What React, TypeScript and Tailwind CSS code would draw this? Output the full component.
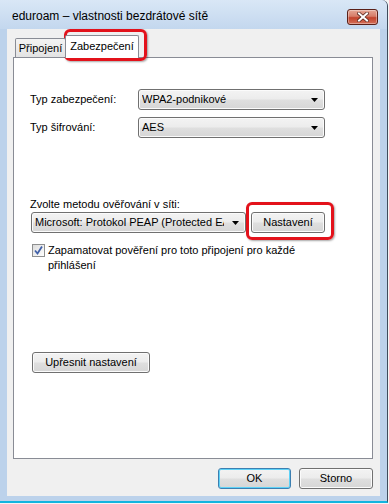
const comboBg =
  "bg-[linear-gradient(to_bottom,#f3f3f3_0%,#ececec_48%,#dfdfdf_52%,#d6d6d6_100%)]";

function Arrow() {
  return (
    <svg width="7" height="4" viewBox="0 0 7 4" className="shrink-0">
      <path d="M0 0 H7 L3.5 4 Z" fill="#000" />
    </svg>
  );
}

function Combo({ value, className }: { value: string; className: string }) {
  return (
    <div
      className={`h-[21px] flex items-center pl-[3px] pr-[6px] rounded-[3px] border border-[#707070] ${comboBg} shadow-[inset_0_0_0_1px_#fbfbfb] ${className}`}
    >
      <span className="flex-1 min-w-0 whitespace-nowrap overflow-hidden leading-[15px] mr-[8px]">{value}</span>
      <Arrow />
    </div>
  );
}

function Button({
  label,
  className,
  primary,
}: {
  label: string;
  className: string;
  primary?: boolean;
}) {
  return (
    <div
      className={`h-[21px] flex items-center justify-center rounded-[3px] border ${
        primary
          ? "border-[#3c7fb1] shadow-[inset_0_0_0_1px_#5ed2f7]"
          : "border-[#707070] shadow-[inset_0_0_0_1px_#fbfbfb]"
      } ${comboBg} ${className}`}
    >
      <span className="leading-[15px]">{label}</span>
    </div>
  );
}

function Highlight({ className }: { className: string }) {
  return (
    <div
      className={`absolute rounded-[6px] border-[3px] border-[#e3121b] shadow-[1px_1px_2px_rgba(0,0,0,0.35)] pointer-events-none ${className}`}
    />
  );
}

export default function App() {
  return (
    <div className="w-[389px] h-[504px] bg-[#f4f4f4] font-['Liberation_Sans',Arial,sans-serif] text-[11px] text-black">
      <div className="relative w-[388px] h-[503px] flex flex-col rounded-tr-[6px] border-r border-[#3f4c5c] border-b-2 border-b-[#12b4df] bg-[#bcd2eb]">
        {/* title bar */}
        <div className="h-[29px] flex items-start justify-between pl-[12px] pr-[9px] pt-[9px] rounded-tr-[6px] bg-[linear-gradient(to_bottom,#d9e7f6,#c3d7ee)]">
          <span className="leading-[15px] text-[12px] text-black">eduroam – vlastnosti bezdrátové sítě</span>
          <div className="w-[31px] h-[16px] flex items-center justify-center rounded-[3px] border border-[#5a2018] bg-[linear-gradient(to_bottom,#e5a796_0%,#d67c68_45%,#c2432c_55%,#d46f58_100%)] shadow-[inset_0_0_0_1px_rgba(255,255,255,0.35)]">
            <svg width="12" height="10" viewBox="0 0 12 10">
              <path d="M2 1.5 L10 8.5 M10 1.5 L2 8.5" stroke="#5b2a22" strokeWidth="3.6" strokeLinecap="square" />
              <path d="M2 1.5 L10 8.5 M10 1.5 L2 8.5" stroke="#ffffff" strokeWidth="2" strokeLinecap="square" />
            </svg>
          </div>
        </div>

        {/* client area */}
        <div className="h-[467px] ml-[7px] w-[373px] bg-[#f0f0f0] flex flex-col pt-[6px]">
          {/* tabs */}
          <div className="h-[22px] flex items-end pl-[8px] relative z-10">
            <div className="h-[19px] w-[51px] flex items-center justify-center border border-b-0 border-[#898c95] rounded-t-[2px] bg-[linear-gradient(to_bottom,#f3f3f3,#e3e3e3)]">
              <span className="leading-[15px]">Připojení</span>
            </div>
            <div className="h-[23px] -mb-px -ml-px w-[74px] flex items-start justify-center pt-[3px] border border-b-0 border-[#898c95] rounded-t-[2px] bg-white">
              <span className="leading-[15px]">Zabezpečení</span>
            </div>
          </div>

          {/* panel */}
          <div className="ml-[6px] w-[360px] h-[402px] border border-[#898c95] bg-white flex flex-col pl-[16px] pt-[31px]">
            <div className="flex items-center h-[21px]">
              <span className="w-[108px] leading-[15px]">Typ zabezpečení:</span>
              <Combo value="WPA2-podnikové" className="w-[187px]" />
            </div>
            <div className="flex items-center h-[21px] mt-[7px]">
              <span className="w-[108px] leading-[15px]">Typ šifrování:</span>
              <Combo value="AES" className="w-[187px]" />
            </div>

            <div className="mt-[59px] leading-[15px]">Zvolte metodu ověřování v síti:</div>
            <div className="flex items-center">
              <Combo value="Microsoft: Protokol PEAP (Protected EAP)" className="w-[215px] ml-px" />
              <Button label="Nastavení" className="w-[74px] ml-[5px]" />
            </div>

            <div className="flex items-start mt-[10px] pl-[2px]">
              <div className="w-[13px] h-[13px] mt-[1px] border border-[#8e8f8f] bg-[linear-gradient(135deg,#dcdcdc,#ffffff)] flex items-center justify-center shrink-0">
                <svg width="11" height="11" viewBox="0 0 11 11">
                  <path d="M2 5.5 L4.5 8.5 L9 1.5" stroke="#4060a8" strokeWidth="1.8" fill="none" />
                </svg>
              </div>
              <div className="ml-[3px] leading-[15px]">
                <div>Zapamatovat pověření pro toto připojení pro každé</div>
                <div>přihlášení</div>
              </div>
            </div>

            <Button label="Upřesnit nastavení" className="w-[118px] mt-[79px] ml-[2px]" />
          </div>

          {/* bottom buttons */}
          <div className="flex justify-end gap-[8px] mt-[9px] pr-[7px]">
            <Button label="OK" className="w-[73px]" primary />
            <Button label="Storno" className="w-[74px]" />
          </div>
        </div>

        <Highlight className="left-[64px] top-[29px] w-[83px] h-[32px]" />
        <Highlight className="left-[246px] top-[202px] w-[88px] h-[38px]" />
      </div>
    </div>
  );
}
